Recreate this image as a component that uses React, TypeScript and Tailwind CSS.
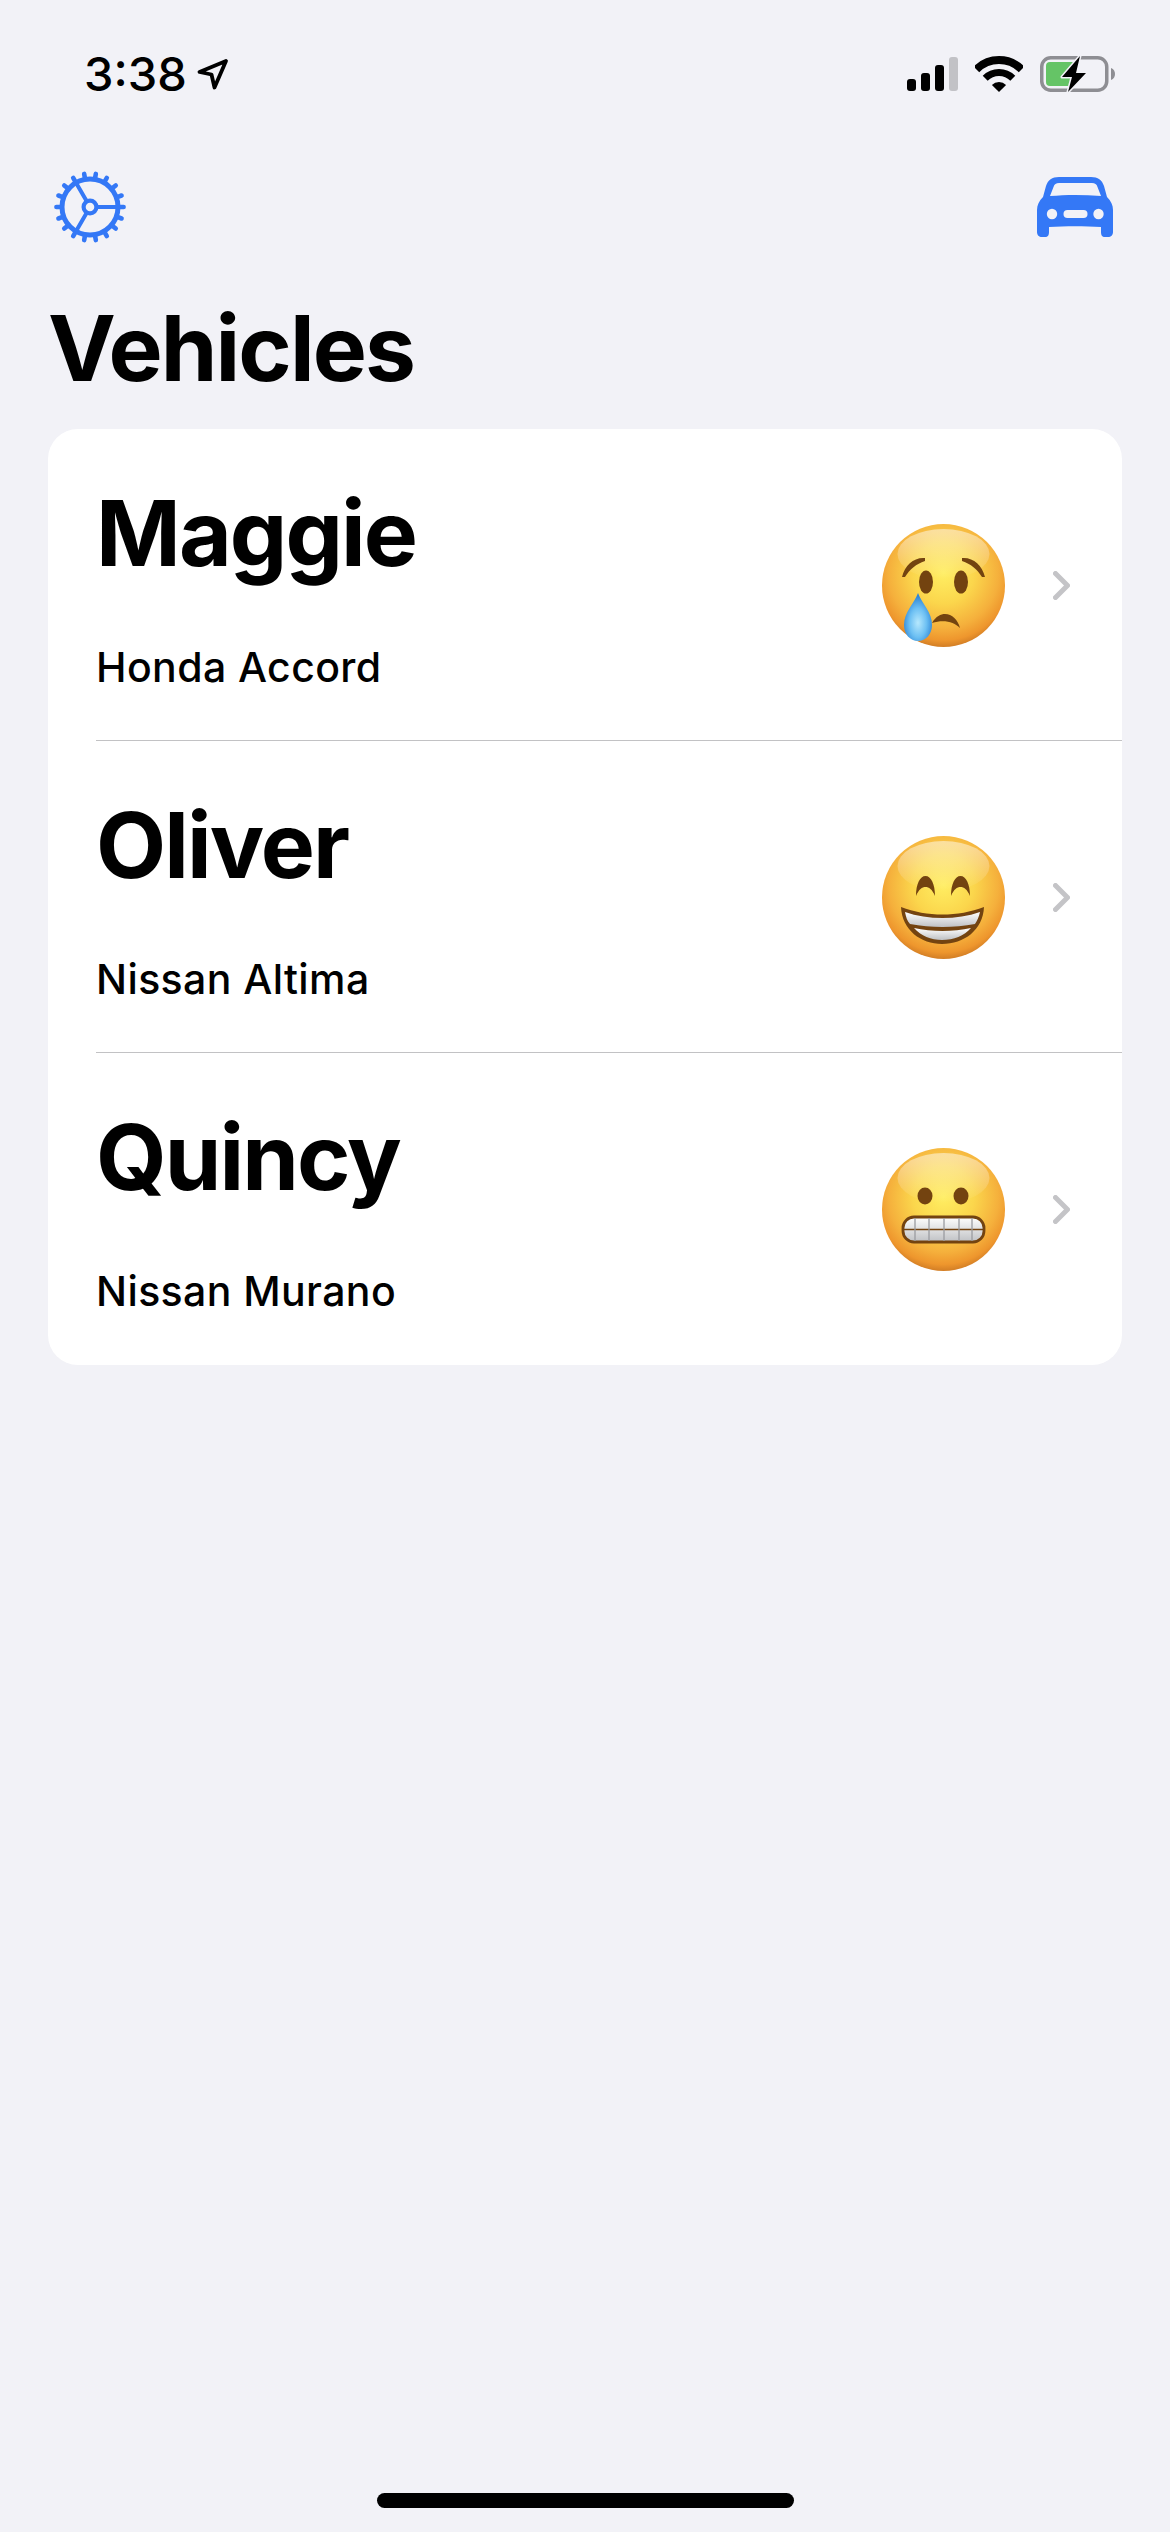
import type { ReactNode } from "react";

const BROWN = "#734310";

// 18 teeth, one every 20deg, starting on the right-hand spoke
const GEAR_TEETH = Array.from({ length: 18 }, (_, i) => (i * 20 * Math.PI) / 180);

function GearIcon() {
  return (
    <svg width="72" height="72" viewBox="0 0 72 72" fill="none" stroke="#3478f6">
      <circle cx="36" cy="36" r="28" strokeWidth="5" />
      {GEAR_TEETH.map((a, i) => (
        <line
          key={i}
          x1={36 + 29 * Math.cos(a)}
          y1={36 + 29 * Math.sin(a)}
          x2={36 + 33.6 * Math.cos(a)}
          y2={36 + 33.6 * Math.sin(a)}
          strokeWidth="4.6"
          strokeLinecap="round"
        />
      ))}
      <circle cx="36" cy="36" r="6.4" strokeWidth="4.2" />
      <path d="M42 36H63M33 30.8L22 11.8M33 41.2L22 60.2" strokeWidth="4" />
    </svg>
  );
}

function CarIcon() {
  return (
    <svg width="76" height="60" viewBox="0 0 76 60">
      <path
        fillRule="evenodd"
        fill="#3478f6"
        d="M22 0H54C61 0 65 3 67 9L70 20C74 24 76 28 76 33V55C76 58 74 60 71 60H68C65 60 64 58 64 55V50C48 49 28 49 12 50V55C12 58 11 60 8 60H5C2 60 0 58 0 55V33C0 28 2 24 6 20L9 9C11 3 15 0 22 0ZM22 6C19 6 17.5 7 16.5 10L13 19C29 17.5 47 17.5 64 19L60.5 10C59.5 7 58 6 55 6Z"
      />
      <circle cx="15" cy="37" r="5.2" fill="#f2f2f7" />
      <circle cx="61.5" cy="37" r="5.2" fill="#f2f2f7" />
      <rect x="26.5" y="33" width="24" height="8" rx="4" fill="#f2f2f7" />
    </svg>
  );
}

function LocationArrow() {
  return (
    <svg width="32" height="32" viewBox="0 0 32 32" fill="none">
      <path
        d="M29 3L2.5 14L14.5 16.5L17.5 29.5Z"
        stroke="#000"
        strokeWidth="3.8"
        strokeLinejoin="round"
      />
    </svg>
  );
}

function SignalBars() {
  return (
    <div className="flex items-end gap-[5px] h-[34px]">
      <div className="w-[9px] h-[12px] rounded-[3px] bg-black" />
      <div className="w-[9px] h-[18px] rounded-[3px] bg-black" />
      <div className="w-[9px] h-[26px] rounded-[3px] bg-black" />
      <div className="w-[9px] h-[34px] rounded-[3px] bg-[#c2c2c6]" />
    </div>
  );
}

function WifiIcon() {
  return (
    <svg width="48" height="36" viewBox="0 0 48 36" fill="none" stroke="#000">
      <path d="M1.4 13.4A32 32 0 0 1 46.6 13.4" strokeWidth="8" />
      <path d="M10.2 22.2A19.5 19.5 0 0 1 37.8 22.2" strokeWidth="7" />
      <path d="M24 36L16.9 28.9A10 10 0 0 1 31.1 28.9Z" fill="#000" stroke="none" />
    </svg>
  );
}

function BatteryIcon() {
  return (
    <svg width="76" height="38" viewBox="0 0 76 38" fill="none">
      <rect x="1.75" y="2.75" width="65" height="32.5" rx="9" stroke="#8e8e93" strokeWidth="3.5" />
      <path d="M71 13C74 14 75 16.5 75 19C75 21.5 74 24 71 25Z" fill="#8e8e93" />
      <rect x="6" y="7" width="30" height="24" rx="4" fill="#65c466" />
      <path
        d="M40 1L22 22H32L28 37L46 18H36Z"
        fill="#000"
        stroke="#f2f2f7"
        strokeWidth="3"
        strokeLinejoin="round"
        paintOrder="stroke"
      />
    </svg>
  );
}

function EmojiFace({ id, children }: { id: string; children: ReactNode }) {
  return (
    <svg width="123" height="123" viewBox="0 0 123 123" className="shrink-0">
      <defs>
        <radialGradient id={`${id}-face`} cx="0.5" cy="0.4" r="0.62">
          <stop offset="0" stopColor="#ffee62" />
          <stop offset="0.4" stopColor="#fbd64c" />
          <stop offset="0.72" stopColor="#f5b03c" />
          <stop offset="0.88" stopColor="#ee962d" />
          <stop offset="1" stopColor="#c87522" />
        </radialGradient>
        <linearGradient id={`${id}-shine`} x1="0" y1="0" x2="0" y2="1">
          <stop offset="0" stopColor="#fff" stopOpacity="0.5" />
          <stop offset="1" stopColor="#fff" stopOpacity="0" />
        </linearGradient>
        <linearGradient id={`${id}-teeth`} x1="0" y1="0" x2="0" y2="1">
          <stop offset="0" stopColor="#ffffff" />
          <stop offset="1" stopColor="#bfc1c4" />
        </linearGradient>
        <radialGradient id={`${id}-tear`} cx="0.5" cy="0.62" r="0.55">
          <stop offset="0" stopColor="#b6e8fd" />
          <stop offset="0.55" stopColor="#6dc0f3" />
          <stop offset="1" stopColor="#2f86d6" />
        </radialGradient>
      </defs>
      <circle cx="61.5" cy="61.5" r="61.5" fill={`url(#${id}-face)`} />
      <ellipse cx="61.5" cy="30" rx="46" ry="25" fill={`url(#${id}-shine)`} />
      {children}
    </svg>
  );
}

function CryingEmoji() {
  return (
    <EmojiFace id="cry">
      <path d="M20 53C23 41 32 33 43 34L43 37C34 40 28 45 23 53Z" fill={BROWN} />
      <path d="M103 53C100 41 91 33 80 34L80 37C89 40 95 45 100 53Z" fill={BROWN} />
      <ellipse cx="44" cy="58" rx="7" ry="11.5" fill={BROWN} />
      <ellipse cx="79" cy="58" rx="7" ry="11.5" fill={BROWN} />
      <path d="M50 99C54 92 59 90 63 90C70 90 76 96 78 104C72 98 62 95 50 99Z" fill={BROWN} />
      <path
        d="M36 69C40 80 50 88 50 101C50 110 44 117 36 117C28 117 22 110 22 101C22 88 32 80 36 69Z"
        fill="url(#cry-tear)"
      />
    </EmojiFace>
  );
}

function GrinEmoji() {
  return (
    <EmojiFace id="grin">
      <path d="M34 60C34 48 38 40 43.5 40C49 40 53 48 53 60C50 53 47 51 43.5 51C40 51 37 53 34 60Z" fill={BROWN} />
      <path d="M69 60C69 48 73 40 78.5 40C84 40 88 48 88 60C85 53 82 51 78.5 51C75 51 72 53 69 60Z" fill={BROWN} />
      <path d="M19 71C45 81 76 81 102 71C101 94 82 108 60 108C39 108 20 94 19 71Z" fill={BROWN} />
      <path d="M23 76C46 84 75 84 98 76C97 81 95 85 93 88C72 92 49 92 28 88C25 85 24 81 23 76Z" fill="url(#grin-teeth)" />
      <path d="M32 92C50 96 71 96 89 92C82 100 72 104 60 104C49 104 39 100 32 92Z" fill="url(#grin-teeth)" />
    </EmojiFace>
  );
}

function GrimaceEmoji() {
  return (
    <EmojiFace id="grim">
      <ellipse cx="43" cy="48" rx="7.5" ry="8.5" fill={BROWN} />
      <ellipse cx="79" cy="48" rx="7.5" ry="8.5" fill={BROWN} />
      <rect x="21" y="69" width="81" height="25" rx="11" fill="url(#grim-teeth)" stroke={BROWN} strokeWidth="2.8" />
      <path d="M21 81.5H102" stroke={BROWN} strokeWidth="1.5" />
      <path d="M33 70V93M47 70V93M62 70V93M77 70V93M90 70V93" stroke="#9a9ca0" strokeWidth="1.3" />
    </EmojiFace>
  );
}

function Chevron() {
  return (
    <svg width="17" height="29" viewBox="0 0 17 29" fill="none" className="shrink-0">
      <path d="M2.5 2.5L14.5 14.5L2.5 26.5" stroke="#c4c4c7" strokeWidth="5" strokeLinecap="round" strokeLinejoin="round" />
    </svg>
  );
}

const vehicles = [
  { name: "Maggie", model: "Honda Accord", emoji: <CryingEmoji /> },
  { name: "Oliver", model: "Nissan Altima", emoji: <GrinEmoji /> },
  { name: "Quincy", model: "Nissan Murano", emoji: <GrimaceEmoji /> },
];

export default function App() {
  return (
    <div className="flex flex-col w-[1170px] h-[2532px] bg-[#f2f2f7] text-black font-['Inter',sans-serif]">
      {/* Status bar */}
      <div className="flex items-center justify-between h-[148px] pl-[84px] pr-[54px] shrink-0">
        <div className="flex items-center gap-[10px]">
          <span className="text-[47px] leading-[56px] font-medium">3:38</span>
          <LocationArrow />
        </div>
        <div className="flex items-center">
          <SignalBars />
          <div className="ml-[17px]">
            <WifiIcon />
          </div>
          <div className="ml-[17px]">
            <BatteryIcon />
          </div>
        </div>
      </div>

      {/* Toolbar */}
      <div className="flex items-center justify-between h-[118px] pl-[54px] pr-[57px] shrink-0">
        <GearIcon />
        <CarIcon />
      </div>

      <h1 className="mt-[27px] pl-[48px] text-[91px] leading-[110px] font-bold tracking-[-1.9px]">Vehicles</h1>

      {/* Vehicle list */}
      <div className="mt-[26px] mx-[48px] rounded-[30px] bg-white overflow-hidden">
        {vehicles.map((v, i) => (
          <div key={v.name} className="relative flex items-center justify-between h-[312px] pl-[48px] pr-[52px]">
            <div className="self-start">
              <div className="pt-[49px] text-[91px] leading-[110px] font-bold tracking-[-1.9px]">{v.name}</div>
              <div className="mt-[54px] text-[41px] leading-[50px] font-[550] tracking-[0.4px]">{v.model}</div>
            </div>
            <div className="flex items-center gap-[48px]">
              {v.emoji}
              <Chevron />
            </div>
            {i < vehicles.length - 1 && (
              <div className="absolute bottom-0 left-[48px] right-0 h-px bg-[#c2c2c4]" />
            )}
          </div>
        ))}
      </div>

      <div className="mt-auto mb-[24px] self-center w-[417px] h-[15px] rounded-full bg-black" />
    </div>
  );
}
